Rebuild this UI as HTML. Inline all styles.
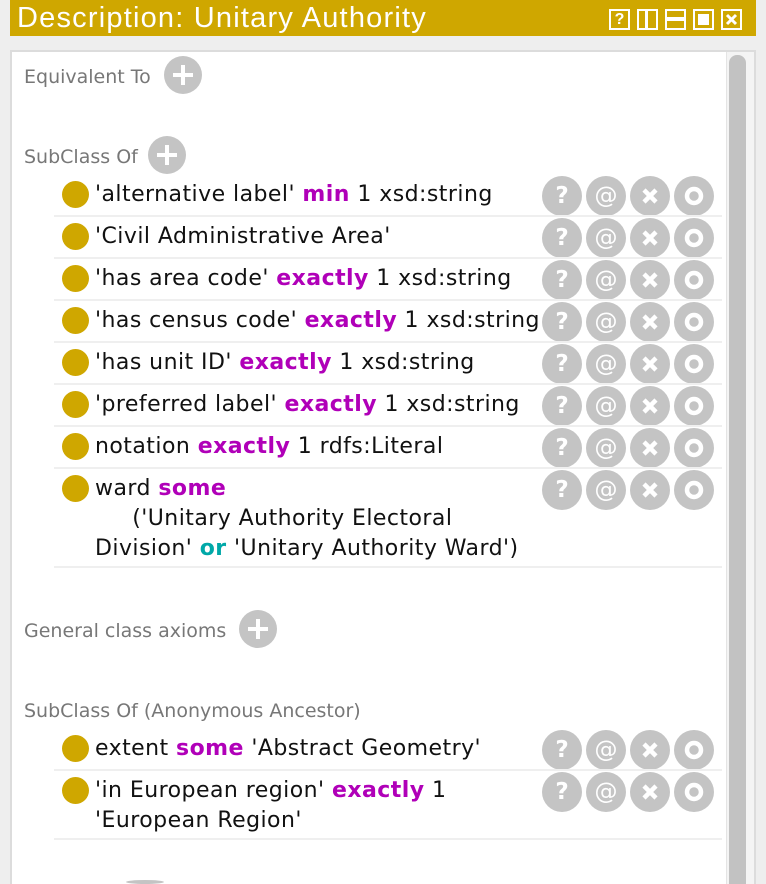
<!DOCTYPE html>
<html><head><meta charset="utf-8"><style>
*{margin:0;padding:0;box-sizing:border-box}
html,body{width:766px;height:884px;overflow:hidden}
body{background:#eeeeee;font-family:"DejaVu Sans","Liberation Sans",sans-serif;position:relative}
.title{position:absolute;left:10px;top:0;width:746px;height:36px;background:#cfa700;color:#fff;font-family:"Liberation Sans",sans-serif;font-size:29px;letter-spacing:1.2px;line-height:36px;padding-left:7px}
.tb{position:absolute;top:9px;width:21px;height:21px;border:2px solid #fff;color:#fff;font-family:"Liberation Sans",sans-serif;font-size:16px;font-weight:bold;line-height:17px;text-align:center}
.panel{position:absolute;left:10px;top:50px;width:746px;height:834px;background:#fff;border:2px solid #dcdcdc;border-bottom:none;overflow:hidden}
.track{position:absolute;left:714px;top:0;width:30px;height:834px;background:#f4f4f4;border-left:1px solid #e4e4e4}
.thumb{position:absolute;left:729px;top:55px;width:17px;height:829px;background:#c2c2c2;border-radius:8px 8px 0 0}
.lbl{position:absolute;color:#777;font-size:19px;line-height:24px}
.plus{position:absolute;width:38px;height:38px;border-radius:50%;background:#c4c4c4;overflow:hidden}
.plus:before{content:"";position:absolute;left:9px;top:17px;width:20px;height:4px;background:#fff}
.plus:after{content:"";position:absolute;left:17px;top:9px;width:4px;height:20px;background:#fff}
.row{position:absolute;left:95px;font-size:22px;letter-spacing:0.45px;line-height:30px;color:#111;white-space:nowrap}
.dot{position:absolute;left:62px;width:27px;height:27px;border-radius:50%;background:#cfa700}
.k{color:#b000b8;font-weight:bold}
.c{color:#00a8a8;font-weight:bold}
.sep{position:absolute;left:54px;width:668px;height:2px;background:#efefef}
.btn{position:absolute;width:40px;height:40px;border-radius:50%;background:#c4c4c4;color:#fff;font-size:23px;line-height:40px;text-align:center}
.btn svg{position:absolute;left:0;top:0}
</style></head><body>
<div class="title">Description: Unitary Authority</div>
<div class="tb" style="left:609px">?</div>
<div class="tb" style="left:637px"><div style="position:absolute;left:6px;top:0;width:3px;height:17px;background:#fff"></div></div>
<div class="tb" style="left:665px"><div style="position:absolute;left:0;top:6px;width:17px;height:4px;background:#fff"></div></div>
<div class="tb" style="left:693px"><div style="position:absolute;left:3px;top:3px;width:11px;height:11px;background:#fff"></div></div>
<div class="tb" style="left:721px"><svg width="17" height="17" style="position:absolute;left:0;top:0"><path d="M4 4L13 13M13 4L4 13" stroke="#fff" stroke-width="3"/></svg></div>
<div class="panel"><div class="track"></div></div>
<div class="thumb"></div>

<div class="lbl" style="left:24px;top:65px">Equivalent To</div>
<div class="plus" style="left:164px;top:56px"></div>
<div class="lbl" style="left:24px;top:145px">SubClass Of</div>
<div class="plus" style="left:148px;top:136px"></div>
<div class="lbl" style="left:24px;top:619px">General class axioms</div>
<div class="plus" style="left:239px;top:610px"></div>
<div class="lbl" style="left:24px;top:699px">SubClass Of (Anonymous Ancestor)</div>
<div class="plus" style="left:126px;top:880px;height:4px"></div>

<div id="rows"></div>
<script>
var rows=[
[193,"'alternative label' <span class=k>min</span> 1 xsd:string"],
[235,"'Civil Administrative Area'"],
[277,"'has area code' <span class=k>exactly</span> 1 xsd:string"],
[319,"'has census code' <span class=k>exactly</span> 1 xsd:string"],
[361,"'has unit ID' <span class=k>exactly</span> 1 xsd:string"],
[403,"'preferred label' <span class=k>exactly</span> 1 xsd:string"],
[445,"notation <span class=k>exactly</span> 1 rdfs:Literal"],
[487,"ward <span class=k>some</span><br>&nbsp;&nbsp;&nbsp;&nbsp;&nbsp;('Unitary Authority Electoral<br>Division' <span class=c>or</span> 'Unitary Authority Ward')"],
[747,"extent <span class=k>some</span> 'Abstract Geometry'"],
[789,"'in European region' <span class=k>exactly</span> 1<br>'European Region'"]];
var seps=[215,257,299,341,383,425,467,566,769,838];
var h="";
var X='<svg width="40" height="40"><path d="M14 14L26 26M26 14L14 26" stroke="#fff" stroke-width="4.5"/></svg>';
var O='<svg width="40" height="40"><circle cx="20" cy="20" r="7" fill="none" stroke="#fff" stroke-width="4.5"/></svg>';
rows.forEach(function(r){var y=r[0];
h+='<div class="dot" style="top:'+(y-12)+'px"></div>';
h+='<div class="row" style="top:'+(y-13)+'px">'+r[1]+'</div>';
var xs=[562,606,650,694],g=['<b>?</b>','@',X,O];
for(var i=0;i<4;i++)h+='<div class="btn" style="left:'+(xs[i]-20)+'px;top:'+(y-17)+'px">'+g[i]+'</div>';});
seps.forEach(function(s){h+='<div class="sep" style="top:'+s+'px"></div>'});
document.getElementById('rows').innerHTML=h;
</script>
</body></html>
